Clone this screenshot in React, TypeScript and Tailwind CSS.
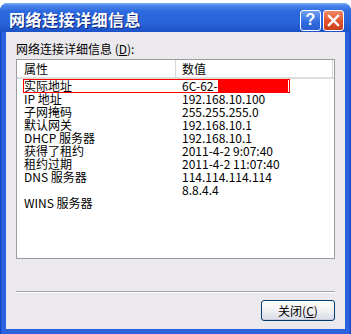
import React from "react";

const rows: { name: string; value: string; redacted?: boolean }[] = [
  { name: "实际地址", value: "6C-62-", redacted: true },
  { name: "IP 地址", value: "192.168.10.100" },
  { name: "子网掩码", value: "255.255.255.0" },
  { name: "默认网关", value: "192.168.10.1" },
  { name: "DHCP 服务器", value: "192.168.10.1" },
  { name: "获得了租约", value: "2011-4-2 9:07:40" },
  { name: "租约过期", value: "2011-4-2 11:07:40" },
  { name: "DNS 服务器", value: "114.114.114.114" },
  { name: "", value: "8.8.4.4" },
  { name: "WINS 服务器", value: "" },
];

function HelpButton() {
  return (
    <div className="flex h-[21px] w-[21px] items-center justify-center rounded-[3px] border border-white bg-[linear-gradient(to_bottom,#6f9ff0,#2f6ae0_60%,#2a5fd2)] text-[16px] font-bold leading-none text-white [font-family:'Liberation_Sans',sans-serif]">
      ?
    </div>
  );
}

function CloseButton() {
  return (
    <div className="flex h-[21px] w-[21px] items-center justify-center rounded-[3px] border border-white bg-[linear-gradient(to_bottom,#f08a66,#e0522c_55%,#c9401c)]">
      <svg width="13" height="13" viewBox="0 0 13 13">
        <path d="M2 2 L11 11 M11 2 L2 11" stroke="white" strokeWidth="2.4" strokeLinecap="square" />
      </svg>
    </div>
  );
}

export default function App() {
  return (
    <div className="h-[334px] w-[351px] overflow-hidden bg-white pt-[3px] [font-family:'Noto_Sans_CJK_SC',sans-serif]">
      <div className="flex h-[331px] flex-col rounded-t-[8px] bg-[linear-gradient(to_right,#0b3fc4,#2a63dd_2px,#2a63dd_calc(100%-2px),#0b3fc4)]">
        {/* title bar */}
        <div className="flex h-[29px] items-center justify-between rounded-t-[8px] bg-[linear-gradient(to_bottom,#86b4f6_0%,#4a86ec_8%,#2c68de_30%,#2862d8_70%,#1c52c8_100%)] pl-[9px] pr-[7px] pt-[2px]">
          <span className="text-[16px] font-bold leading-none tracking-[0.5px] text-white [text-shadow:1px_1px_0_#0f2a80]">
            网络连接详细信息
          </span>
          <div className="flex gap-[2px] pt-[3px]">
            <HelpButton />
            <CloseButton />
          </div>
        </div>

        {/* client area */}
        <div className="mb-[5px] ml-[6px] mr-[6px] flex flex-1 flex-col bg-[#ebe9ed] px-[10px] pt-[9px] text-[12px] text-black">
          <div className="leading-[16px]">
            网络连接详细信息 (<span className="underline">D</span>):
          </div>

          <div className="mt-[2px] h-[200px] border border-[#9c9c9c] bg-white">
            <div className="grid h-[19px] grid-cols-[159px_1fr] border-b-2 border-[#dcdcdc] leading-[17px]">
              <div className="border-r border-[#d8d8d8] pl-[7px]">属性</div>
              <div className="mr-[1px] border-r border-[#d8d8d8] pl-[6px]">数值</div>
            </div>
            {rows.map((row, i) => (
              <div key={i} className="relative grid h-[13px] grid-cols-[165px_1fr] whitespace-pre leading-[13px]">
                <div className="pl-[7px]">{row.name}</div>
                <div className="flex items-center">
                  {row.value}
                  {row.redacted && <span className="inline-block h-[12px] w-[70px] bg-[#ff0000]" />}
                </div>
                {row.redacted && (
                  <div className="absolute left-[6px] top-0 h-[14px] w-[267px] border border-[#ff0000]" />
                )}
              </div>
            ))}
          </div>

          <div className="mt-[32px] h-[2px] border-t border-[#a5a5a5] border-b border-b-white" />

          <div className="mt-[7px] flex justify-end">
            <div className="flex h-[21px] w-[74px] items-center justify-center rounded-[3px] border border-[#003c74] bg-[linear-gradient(to_bottom,#ffffff,#f4f4f6_40%,#dadbe6)] leading-none shadow-[inset_0_-1px_0_#c8cde0]">
              关闭(<span className="underline">C</span>)
            </div>
          </div>
        </div>
      </div>
    </div>
  );
}
